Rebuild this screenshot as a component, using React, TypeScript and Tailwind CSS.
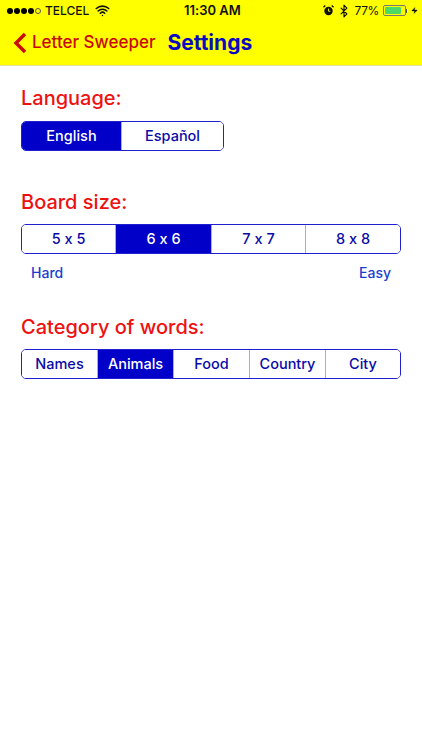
import { Bluetooth, Wifi, Zap } from 'lucide-react';

const sans = "font-['Inter','Liberation_Sans',sans-serif] [font-feature-settings:'calt'_0]";

const Segments = ({ items, active, className }: { items: string[]; active: string; className: string }) => (
    <div className={`grid h-[30px] rounded-[5px] border border-[#2020d0] overflow-hidden ${className}`}>
        {items.map((item, i) => (
            <div
                key={item}
                className={`flex items-center justify-center text-[14.5px] font-medium ${i > 0 ? 'border-l border-[#a8a8ee]' : ''} ${item === active ? 'bg-[#0000c8] text-white' : 'bg-white text-[#0a0aa8]'}`}
            >
                {item}
            </div>
        ))}
    </div>
);

export default function App() {
    return (
        <div className={`w-[422px] h-[750px] bg-white overflow-hidden ${sans}`}>
            {/* Status bar + nav */}
            <header className="h-[66px] bg-[#ffff00] border-b border-[#e0e0a0]">
                <div className="h-[21px] pl-[7px] pr-[4px] flex items-center text-[13px] text-[#111] relative">
                    <div className="flex items-center gap-[1px]">
                        <span className="w-[6px] h-[6px] rounded-full bg-black" />
                        <span className="w-[6px] h-[6px] rounded-full bg-black" />
                        <span className="w-[6px] h-[6px] rounded-full bg-black" />
                        <span className="w-[6px] h-[6px] rounded-full bg-black" />
                        <span className="w-[6px] h-[6px] rounded-full border border-[#555]" />
                    </div>
                    <span className="ml-[4px] text-[12px] font-medium">TELCEL</span>
                    <Wifi className="ml-[6px] w-[15px] h-[15px]" strokeWidth={2.5} />
                    <span className="absolute left-[184px] font-semibold">11:30 AM</span>
                    <div className="ml-auto flex items-center">
                        <svg viewBox="0 0 12 12" className="w-[11px] h-[11px]">
                            <circle cx="6" cy="6.5" r="4.6" fill="#111" />
                            <path d="M0.5 2.5 L2.5 0.5 M11.5 2.5 L9.5 0.5" stroke="#111" strokeWidth="1.4" />
                            <path d="M6 4 V6.8 H8" stroke="#ff0" strokeWidth="1" fill="none" />
                        </svg>
                        <Bluetooth className="ml-[3px] w-[14px] h-[14px]" strokeWidth={2} />
                        <span className="ml-[4px] text-[12px] tracking-[-0.4px]">77%</span>
                        <div className="ml-[4px] w-[23px] h-[11px] rounded-[2px] border border-[#777] p-[1px]">
                            <div className="w-[16px] h-full rounded-[1px] bg-[#4cd964]" />
                        </div>
                        <span className="w-[1px] h-[4px] bg-[#555]" />
                        <Zap className="ml-[4px] w-[7px] h-[11px]" fill="#111" strokeWidth={1} />
                    </div>
                </div>
                <div className="h-[44px] flex items-center pl-[13px]">
                    <svg viewBox="0 0 14 22" className="w-[14px] h-[22px]">
                        <path d="M12 2 L3 11 L12 20" stroke="#cc0a0a" strokeWidth="3.4" fill="none" />
                    </svg>
                    <span className="ml-[5px] text-[17px] font-medium text-[#c80a0a]">Letter Sweeper</span>
                    <span className="ml-[12px] text-[21px] font-bold text-[#0a0ac0]">Settings</span>
                </div>
            </header>

            <main className="pt-[20px] px-[21px]">
                <h2 className="text-[20px] leading-[24px] font-medium text-[#ee1111]">Language:</h2>
                <Segments className="mt-[11px] w-[203px] grid-cols-[99px_1fr]" items={['English', 'Español']} active="English" />

                <h2 className="mt-[39px] text-[20px] leading-[24px] font-medium text-[#ee1111]">Board size:</h2>
                <Segments className="mt-[10px] w-[380px] grid-cols-[93px_96px_94px_1fr]" items={['5 x 5', '6 x 6', '7 x 7', '8 x 8']} active="6 x 6" />
                <div className="mt-[10px] px-[10px] flex justify-between text-[14px] leading-[18px] font-medium text-[#1a3fd0]">
                    <span>Hard</span>
                    <span>Easy</span>
                </div>

                <h2 className="mt-[33px] text-[20px] leading-[24px] font-medium text-[#ee1111]">Category of words:</h2>
                <Segments className="mt-[10px] w-[380px] grid-cols-[75px_76px_76px_76px_1fr]" items={['Names', 'Animals', 'Food', 'Country', 'City']} active="Animals" />
            </main>
        </div>
    );
}
